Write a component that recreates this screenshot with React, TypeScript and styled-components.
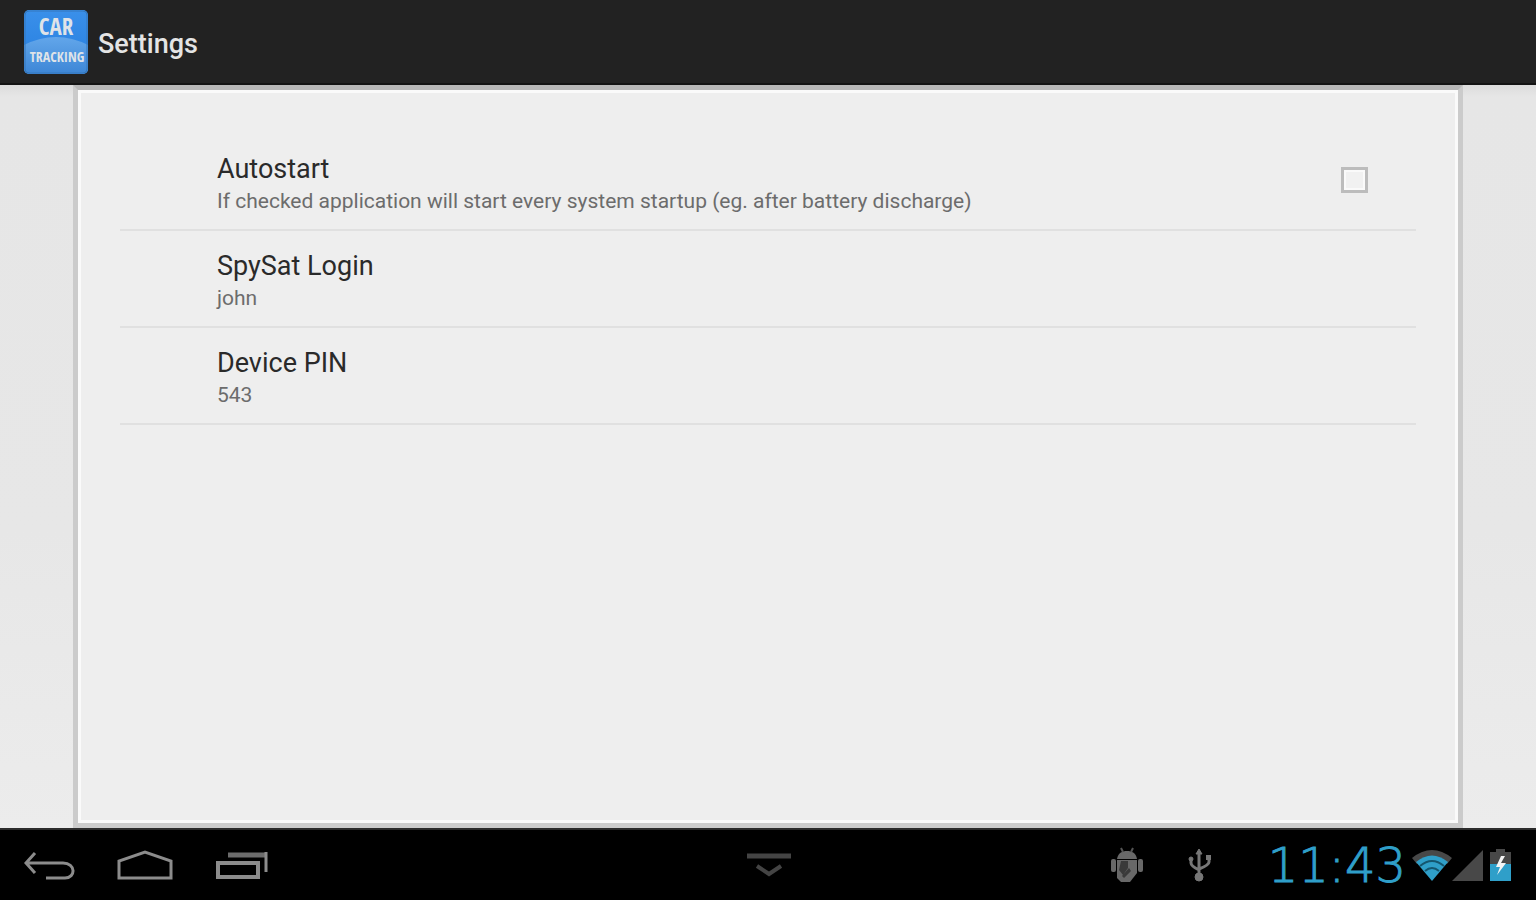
import React, { useState } from "react";
import styled, { createGlobalStyle } from "styled-components";

const Global = createGlobalStyle`
  *, *::before, *::after { box-sizing: border-box; }
  body {
    margin: 0;
    background: #000;
    font-family: Roboto, "Liberation Sans", sans-serif;
  }
`;

const Screen = styled.div`
  display: flex;
  flex-direction: column;
  min-height: 100vh;
`;

const ActionBar = styled.header`
  display: flex;
  align-items: center;
  gap: 10px;
  height: 85px;
  padding: 0 24px;
  background: #222;
  border-bottom: 2px solid #141414;
`;

const Title = styled.h1`
  margin: 0;
  padding-top: 4px;
  font-size: 27px;
  line-height: 32px;
  font-weight: 500;
  color: #e4e4e4;
`;

const Backdrop = styled.main`
  flex: 1;
  display: flex;
  padding: 0 73px;
  background: linear-gradient(#dcdcdc, #e6e6e6 12px, #e7e7e7 60%, #ececec);
`;

const Panel = styled.section`
  flex: 1;
  padding: 41px 39px;
  background: #eee;
  border: 5px solid #cbcbcb;
  border-top-color: #b8b8b8;
  border-bottom-color: #ccc;
  box-shadow: inset 0 0 0 3px #fafafa;
`;

const List = styled.ul`
  margin: 0;
  padding: 3px;
  list-style: none;
`;

const Item = styled.li`
  border-bottom: 2px solid #e0e0e0;
`;

const rowLayout = `
  display: flex;
  align-items: center;
  justify-content: space-between;
  width: 100%;
  height: 95px;
  padding: 0 48px 0 97px;
  text-align: left;
  cursor: pointer;
`;

const ToggleRow = styled.label`
  ${rowLayout}
`;

const ButtonRow = styled.button`
  ${rowLayout}
  border: 0;
  background: none;
  font-family: inherit;
`;

const Texts = styled.span`
  display: flex;
  flex-direction: column;
  padding-top: 4px;
`;

const Name = styled.span`
  font-size: 27px;
  line-height: 34px;
  color: #2a2a2a;
`;

const Summary = styled.span`
  font-size: 21px;
  line-height: 30px;
  color: #6c6c6c;
`;

const Checkbox = styled.input`
  appearance: none;
  flex: none;
  width: 27px;
  height: 26px;
  margin: 0 0 4px;
  border: 3px solid #bcbcbc;
  background: #f1f1f1;
  box-shadow: inset 0 0 0 2px #fafafa;
  &:checked { background: #33b5e5; }
`;

const SystemBar = styled.footer`
  display: grid;
  grid-template-columns: 1fr auto 1fr;
  align-items: center;
  height: 72px;
  padding: 0 24px;
  border-top: 2px solid #2c2c2c;
  background: #000;
`;

const NavGroup = styled.nav`
  display: flex;
  align-items: center;
  gap: 42px;
`;

const NavButton = styled.button`
  display: flex;
  padding: 0;
  border: 0;
  background: none;
  cursor: pointer;
`;

const Status = styled.div`
  display: flex;
  align-items: center;
  justify-content: flex-end;
`;

const Notices = styled.div`
  display: flex;
  align-items: center;
  gap: 45px;
  margin-right: 44px;
`;

const Clock = styled.time`
  width: 150px;
  margin-right: 6px;
  text-align: right;
  font-family: "DejaVu Sans", sans-serif;
  font-weight: 200;
  font-size: 48px;
  line-height: 52px;
  color: #2f9fc9;
  -webkit-text-stroke: 1px #2f9fc9;
`;

const Indicators = styled.div`
  display: flex;
  align-items: flex-end;
`;

const AppLogo = () => (
  <svg width="64" height="64" viewBox="0 0 64 64" role="img" aria-label="Car Tracking">
    <defs>
      <linearGradient id="tile" x1="0" y1="0" x2="0" y2="1">
        <stop offset="0" stopColor="#3a90ea" />
        <stop offset="0.5" stopColor="#2f86e4" />
        <stop offset="1" stopColor="#3b86d6" />
      </linearGradient>
      <linearGradient id="hill" x1="0" y1="0" x2="0" y2="1">
        <stop offset="0" stopColor="#62a6ea" />
        <stop offset="1" stopColor="#3d86d6" />
      </linearGradient>
      <clipPath id="tileClip"><rect width="64" height="64" rx="5" /></clipPath>
    </defs>
    <g clipPath="url(#tileClip)">
      <rect width="64" height="64" fill="url(#tile)" />
      <path d="M0 35 Q32 19 64 35 V64 H0Z" fill="url(#hill)" />
      <rect x="1" y="1" width="62" height="62" rx="4" fill="none" stroke="#3477bb" strokeWidth="1" />
    </g>
    <g fill="#dfe3e8" fontWeight="700" textAnchor="middle">
      <text x="32" y="25" fontSize="23" fontFamily="Open Sans Condensed, Liberation Sans Narrow, sans-serif">CAR</text>
      <text x="33" y="52" fontSize="14" fontFamily="Open Sans Condensed, Liberation Sans Narrow, sans-serif">TRACKING</text>
    </g>
  </svg>
);

const BackIcon = () => (
  <svg width="51" height="30" viewBox="0 0 51 30" fill="none" stroke="#8c8c8c" strokeWidth="3">
    <path d="M11 3 L2 13 L11 23 M2 13 H39 C52 13 52 28 41 28 H22" />
  </svg>
);

const HomeIcon = () => (
  <svg width="56" height="30" viewBox="0 0 56 30" fill="none" stroke="#8c8c8c" strokeWidth="3">
    <path d="M2 28 V11 L28 2 L54 11 V28 Z" />
  </svg>
);

const RecentIcon = () => (
  <svg width="54" height="28" viewBox="0 0 54 28" fill="none" stroke="#8c8c8c">
    <path d="M3 12 H43 V26 H3 Z" strokeWidth="4" />
    <path d="M13 4 H51" stroke="#6c6c6c" strokeWidth="5" />
    <path d="M51 1 V21" strokeWidth="3" />
  </svg>
);

const HideIcon = () => (
  <svg width="46" height="26" viewBox="0 0 46 26" fill="none" stroke="#444">
    <path d="M2 4 H46" strokeWidth="5" />
    <path d="M12 14 L24 22 L36 14" strokeWidth="4" />
  </svg>
);

const DebugIcon = () => (
  <svg width="32" height="36" viewBox="0 0 32 36" fill="#686868">
    <path d="M6 12 C7 6 11 4 16 4 S25 6 26 12Z" />
    <path d="M10 1 L12 5 M22 1 L20 5" stroke="#555" strokeWidth="2" />
    <rect x="0" y="12" width="5" height="13" rx="2" />
    <rect x="27" y="12" width="5" height="13" rx="2" />
    <path d="M6 13 H26 V26 L19 35 L10 35 L6 31Z" />
    <path d="M10 14 H17 V21 L12 28 L8 23Z M18 21 L20 24 L13 31 L11 29Z" fill="#3a3a3a" />
  </svg>
);

const UsbIcon = () => (
  <svg width="24" height="34" viewBox="0 0 24 34" fill="#777" stroke="#777">
    <path d="M11 4 V29 M3 11 V15 Q3 18 11 22 M21 10 V14 Q21 17 11 21" fill="none" strokeWidth="3" />
    <path d="M11 1 L14 6 H8Z" strokeWidth="1" />
    <circle cx="3" cy="11" r="2" />
    <rect x="18" y="7" width="5" height="5" stroke="none" />
    <circle cx="11" cy="29" r="4" />
  </svg>
);

const WifiIcon = () => (
  <svg width="40" height="32" viewBox="0 0 40 32">
    <path d="M0 9 Q20 -7 40 9 L35 15 Q20 4 5 15Z" fill="#484848" />
    <path d="M4 13 Q20 0 36 13 L20 32Z" fill="#2f9fc9" />
    <path d="M8 17 Q20 7 32 17 M13 22 Q20 16 27 22" fill="none" stroke="#14566f" strokeWidth="2" />
  </svg>
);

const SignalIcon = () => (
  <svg width="31" height="31" viewBox="0 0 31 31">
    <path d="M0 31 L31 0 V31Z" fill="#484848" />
  </svg>
);

const BatteryIcon = () => (
  <svg width="29" height="32" viewBox="0 0 29 32">
    <path d="M7 16 V3 H13 V0 H22 V3 H28 V16Z" fill="#484848" />
    <path d="M7 15 H28 V32 H7Z" fill="#2f9fc9" />
    <path d="M18 7 L13 18 H17 L14 26 L23 14 H18 L22 7Z" fill="#f4f4f4" />
  </svg>
);

const fields = [
  { name: "SpySat Login", value: "john" },
  { name: "Device PIN", value: "543" },
];

export default function App() {
  const [autostart, setAutostart] = useState(false);
  return (
    <Screen>
      <Global />
      <ActionBar>
        <AppLogo />
        <Title>Settings</Title>
      </ActionBar>
      <Backdrop>
        <Panel>
          <List>
            <Item>
              <ToggleRow htmlFor="autostart">
                <Texts>
                  <Name>Autostart</Name>
                  <Summary>If checked application will start every system startup (eg. after battery discharge)</Summary>
                </Texts>
                <Checkbox
                  id="autostart"
                  type="checkbox"
                  checked={autostart}
                  onChange={(e) => setAutostart(e.target.checked)}
                />
              </ToggleRow>
            </Item>
            {fields.map((f) => (
              <Item key={f.name}>
                <ButtonRow type="button">
                  <Texts>
                    <Name>{f.name}</Name>
                    <Summary>{f.value}</Summary>
                  </Texts>
                </ButtonRow>
              </Item>
            ))}
          </List>
        </Panel>
      </Backdrop>
      <SystemBar>
        <NavGroup aria-label="System">
          <NavButton aria-label="Back"><BackIcon /></NavButton>
          <NavButton aria-label="Home"><HomeIcon /></NavButton>
          <NavButton aria-label="Recent apps"><RecentIcon /></NavButton>
        </NavGroup>
        <NavButton aria-label="Hide"><HideIcon /></NavButton>
        <Status>
          <Notices>
            <DebugIcon />
            <UsbIcon />
          </Notices>
          <Clock>11:43</Clock>
          <Indicators>
            <WifiIcon />
            <SignalIcon />
            <BatteryIcon />
          </Indicators>
        </Status>
      </SystemBar>
    </Screen>
  );
}
